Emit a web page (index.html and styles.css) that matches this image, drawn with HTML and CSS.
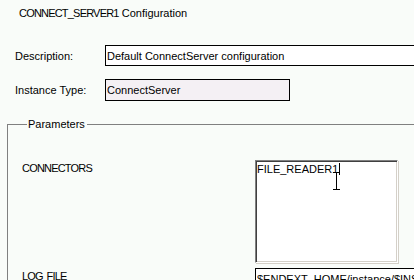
FILE: index.html
```html
<!DOCTYPE html>
<html>
<head>
    <meta charset="utf-8">
    <title>CONNECT_SERVER1 Configuration</title>

    <link rel="stylesheet" href="styles.css">
</head>
<body>

<div class="page">

    <h1 class="title"><span class="caps">CONNECT_SERVER1</span> Configuration</h1>

    <div class="row">
        <label class="row-label" for="description">Description:</label>
        <input class="field field-wide" id="description" type="text" value="Default ConnectServer configuration">
    </div>

    <div class="row">
        <label class="row-label" for="instance-type">Instance Type:</label>
        <input class="field field-readonly" id="instance-type" type="text" value="ConnectServer" readonly>
    </div>

    <fieldset class="params">
        <legend class="params-legend">Parameters</legend>

        <div class="param">
            <span class="param-name caps">CONNECTORS</span>
            <div class="area-wrap">
                <div class="area">FILE_READER1<span class="caret"></span></div>
                <!-- mouse pointer over the text box -->
                <svg class="ibeam" width="9" height="18" viewBox="0 0 9 18">
                    <path d="M1 0.5h7M4.5 1v16M1 17.5h7" stroke="#000" stroke-width="1" fill="none"/>
                </svg>
            </div>
        </div>

        <div class="param">
            <span class="param-name caps">LOG FILE</span>
            <input class="field field-wide" type="text" value="$ENDEXT_HOME/instance/$INSTANCE/log/connect.log">
        </div>
    </fieldset>

</div>

</body>
</html>
```

FILE: styles.css
```css
/* Page */

html, body {
    margin: 0;
    padding: 0;
}

body {
    width: 414px;
    height: 280px;
    overflow: hidden;
    background: #f9fcf9;
    color: #000;
    font-family: "Liberation Sans", Arial, sans-serif;
    font-size: 11px;
}

.page {
    padding: 6px 0 0 0;
}

.title {
    margin: 0 0 0 19px;
    font-size: 11px;
    font-weight: normal;
    line-height: 14px;
}

/* Tahoma capitals are narrower than Arial ones */
.caps {
    letter-spacing: -0.8px;
    word-spacing: 1.5px;
}

/* Top rows */

.row {
    display: flex;
    align-items: center;
    margin-top: 13px;
}
.row:first-of-type {
    margin-top: 25px;
}

.row-label {
    flex: none;
    width: 90px;
    padding-left: 15px;
}

.field {
    box-sizing: border-box;
    height: 21px;
    margin: 0;
    padding: 0 1px;
    border: 1px solid #000;
    border-radius: 0;
    background: #fff;
    font: inherit;
    color: #000;
    outline: none;
}

.field-wide {
    width: 400px;
    flex: none;
}

.field-readonly {
    width: 185px;
    height: 22px;
    background: #f4f0f4;
}

/* Parameters */

.params {
    width: 600px;
    margin: 17px 0 0 7px;
    padding: 0 0 0 14px;
    border: 1px solid #808080;
    border-right: none;
}

.params-legend {
    margin-left: 5px;
    padding: 0 2px 0 1px;
    line-height: 13px;
}

.param {
    display: flex;
    align-items: flex-start;
}
.param:first-of-type {
    margin-top: 29px;
}
.param + .param {
    margin-top: 5px;
}

.param-name {
    flex: none;
    width: 233px;
    padding-top: 2px;
}

.area-wrap {
    position: relative;
}

.area {
    box-sizing: border-box;
    width: 143px;
    height: 103px;
    padding: 2px 1px;
    border-top: 1px solid #808080;
    border-left: 1px solid #808080;
    border-right: 1px solid #fff;
    border-bottom: 1px solid #fff;
    box-shadow: inset 1px 1px 0 #404040, inset -1px -1px 0 #d4d0c8, 1px 1px 0 #d4d0c8;
    background: #fff;
    line-height: 13px;
}

.caret {
    display: inline-block;
    width: 1px;
    height: 12px;
    margin-left: 1px;
    vertical-align: -2px;
    background: #000;
}

.ibeam {
    position: absolute;
    left: 77px;
    top: 12px;
}
```
